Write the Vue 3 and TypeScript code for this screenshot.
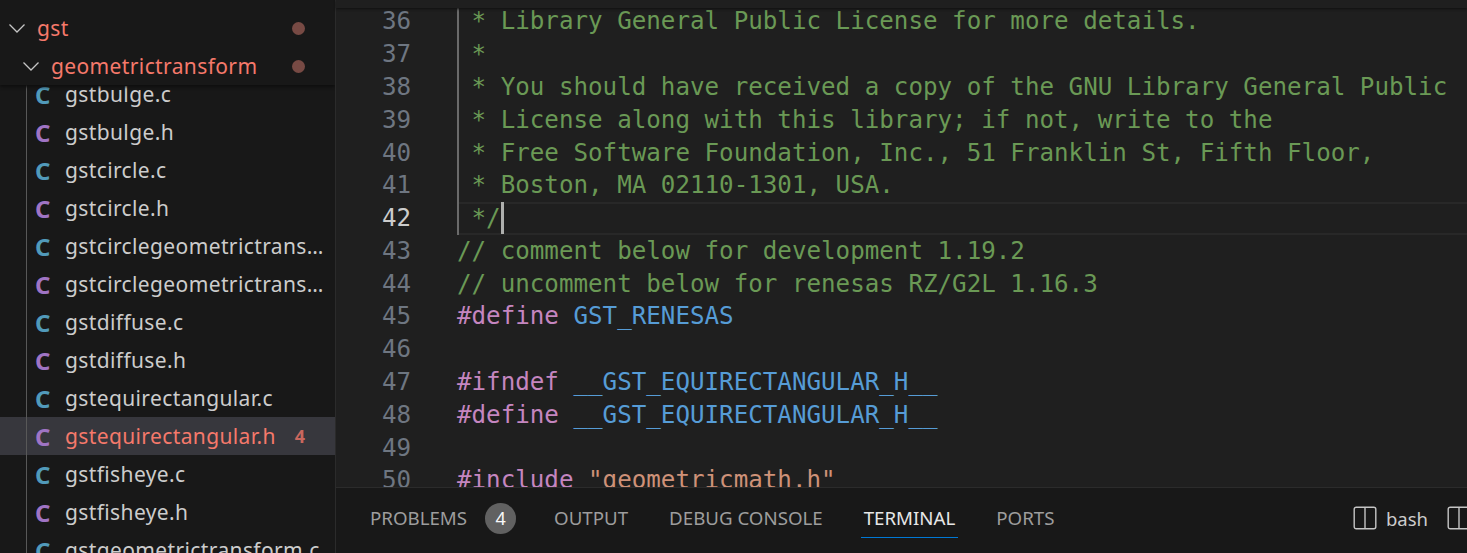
<script setup lang="ts">
interface Tok { t: string; c: string }
interface Line { n: number; toks: Tok[] }
const cm = 'cm', pp = 'pp', mc = 'mc', st = 'st'
const lines: Line[] = [
  { n: 36, toks: [{ t: ' * Library General Public License for more details.', c: cm }] },
  { n: 37, toks: [{ t: ' *', c: cm }] },
  { n: 38, toks: [{ t: ' * You should have received a copy of the GNU Library General Public', c: cm }] },
  { n: 39, toks: [{ t: ' * License along with this library; if not, write to the', c: cm }] },
  { n: 40, toks: [{ t: ' * Free Software Foundation, Inc., 51 Franklin St, Fifth Floor,', c: cm }] },
  { n: 41, toks: [{ t: ' * Boston, MA 02110-1301, USA.', c: cm }] },
  { n: 42, toks: [{ t: ' */', c: cm }] },
  { n: 43, toks: [{ t: '// comment below for development 1.19.2', c: cm }] },
  { n: 44, toks: [{ t: '// uncomment below for renesas RZ/G2L 1.16.3', c: cm }] },
  { n: 45, toks: [{ t: '#define', c: pp }, { t: ' ', c: '' }, { t: 'GST_RENESAS', c: mc }] },
  { n: 46, toks: [] },
  { n: 47, toks: [{ t: '#ifndef', c: pp }, { t: ' ', c: '' }, { t: '__GST_EQUIRECTANGULAR_H__', c: mc }] },
  { n: 48, toks: [{ t: '#define', c: pp }, { t: ' ', c: '' }, { t: '__GST_EQUIRECTANGULAR_H__', c: mc }] },
  { n: 49, toks: [] },
  { n: 50, toks: [{ t: '#include', c: pp }, { t: ' ', c: '' }, { t: '"geometricmath.h"', c: st }] },
]
const files: string[] = [
  'gstbulge.c', 'gstbulge.h', 'gstcircle.c', 'gstcircle.h',
  'gstcirclegeometrictransform.c', 'gstcirclegeometrictransform.h',
  'gstdiffuse.c', 'gstdiffuse.h', 'gstequirectangular.c', 'gstequirectangular.h',
  'gstfisheye.c', 'gstfisheye.h', 'gstgeometrictransform.c',
]
const tabs = ['OUTPUT', 'DEBUG CONSOLE', 'TERMINAL', 'PORTS']
</script>

<template>
  <div class="win">
    <aside class="side">
      <div class="sticky">
        <div class="folder f1">
          <svg class="chev" width="20" height="20" viewBox="0 0 20 20"><path d="M2.5 6.5 L10 14 L17.5 6.5" fill="none" stroke="#c5c5c5" stroke-width="1.3"/></svg>
          <span class="fname">gst</span>
          <i class="dot"></i>
        </div>
        <div class="folder f2">
          <svg class="chev" width="20" height="20" viewBox="0 0 20 20"><path d="M2.5 6.5 L10 14 L17.5 6.5" fill="none" stroke="#c5c5c5" stroke-width="1.3"/></svg>
          <span class="fname">geometrictransform</span>
          <i class="dot"></i>
        </div>
      </div>
      <div class="tree">
        <div v-for="f in files" :key="f" class="file" :class="{ sel: f === 'gstequirectangular.h' }">
          <span class="ico" :class="f.endsWith('.h') ? 'h' : 'c'">C</span>
          <span class="label">{{ f }}</span>
          <span v-if="f === 'gstequirectangular.h'" class="count">4</span>
        </div>
      </div>
    </aside>
    <main class="main">
      <div class="crumbs"></div>
      <div class="editor">
        <div class="code">
          <div v-for="l in lines" :key="l.n" class="line" :class="{ cur: l.n === 42, guide: l.n <= 42 }">
            <span class="num">{{ l.n }}</span>
            <span class="src"><span v-for="(k, i) in l.toks" :key="i" :class="k.c">{{ k.t }}</span><i v-if="l.n === 42" class="caret"></i></span>
          </div>
        </div>
      </div>
      <div class="panel">
        <div class="tab first">PROBLEMS</div>
        <span class="badge">4</span>
        <div v-for="t in tabs" :key="t" class="tab" :class="{ on: t === 'TERMINAL' }">{{ t }}</div>
        <div class="right">
          <svg width="24" height="24" viewBox="0 0 24 24"><rect x="1.2" y="1.2" width="21.6" height="21.6" rx="2" fill="none" stroke="#c5c5c5" stroke-width="1.4"/><path d="M12 2v20" stroke="#c5c5c5" stroke-width="1.4"/></svg>
          <span class="bash">bash</span>
          <svg width="24" height="24" viewBox="0 0 24 24"><rect x="1.2" y="1.2" width="21.6" height="21.6" rx="2" fill="none" stroke="#c5c5c5" stroke-width="1.4"/><path d="M12 2v20" stroke="#c5c5c5" stroke-width="1.4"/></svg>
        </div>
      </div>
    </main>
  </div>
</template>

<style>
html, body { margin: 0; background: #181818; overflow: hidden; }
</style>

<style scoped>
.win { display: flex; width: 1467px; height: 553px; overflow: hidden; background: #181818; font-family: "Noto Sans", sans-serif; }
.side { width: 335px; flex: none; border-right: 1px solid #2b2b2b; overflow: hidden; display: flex; flex-direction: column; height: 553px; position: relative; }
.sticky { height: 85px; padding-top: 9px; box-sizing: border-box; background: #181818; box-shadow: 0 2px 3px #0e0e0e; position: relative; z-index: 2; flex: none; }
.folder { height: 38px; display: flex; align-items: center; font-size: 21px; letter-spacing: 0.38px; color: #f5796b; }
.f1 { padding-left: 7px; }
.f2 { padding-left: 21px; }
.chev { flex: none; margin-right: 10px; }
.fname { flex: 1; line-height: 38px; }
.dot { width: 13px; height: 13px; border-radius: 50%; background: #774a44; margin-right: 30px; }
.tree { margin-top: -10px; }
.file { height: 38px; display: flex; align-items: center; position: relative; color: #cccccc; font-size: 21px; letter-spacing: 0.38px; white-space: nowrap; overflow: hidden; }
.file::before { content: ""; position: absolute; left: 26px; top: 0; bottom: 0; width: 1px; background: #585858; }
.file.sel { background: #37373d; color: #f5796b; }
.ico { width: 65px; box-sizing: border-box; padding-left: 35px; flex: none; font-weight: 700; font-size: 24px; letter-spacing: 0; }
.ico.c { color: #519aba; }
.ico.h { color: #a074c4; }
.label { overflow: hidden; text-overflow: ellipsis; max-width: 265px; }
.count { margin-left: 19px; font-size: 18px; font-weight: 700; color: #c9675e; letter-spacing: 0; }
.main { flex: 1; min-width: 0; display: flex; flex-direction: column; height: 553px; position: relative; }
.crumbs { height: 8px; flex: none; background: #1f1f1f; position: relative; z-index: 2; box-shadow: 0 1px 3px #0f0f0f; }
.editor { flex: 1; min-height: 0; background: #1f1f1f; overflow: hidden; margin-top: -2.7px; }
.code { font-family: "DejaVu Sans Mono", monospace; font-size: 24.2px; }
.line { display: flex; height: 32.8px; line-height: 32.8px; white-space: pre; }
.num { width: 75px; flex: none; text-align: right; color: #6e7681; margin-right: 46px; }
.cur .num { color: #cccccc; }
.src { flex: 1; position: relative; display: block; }
.guide .src { box-shadow: inset 2px 0 0 #6a6a6a; }
.cur .src { box-shadow: inset 2px 0 0 #6a6a6a, inset 0 2px 0 #282828, inset 0 -2px 0 #282828; }
.caret { display: inline-block; width: 3px; height: 32px; background: #aeafad; vertical-align: top; }
.cm { color: #6a9955; }
.pp { color: #c586c0; }
.mc { color: #569cd6; }
.st { color: #ce9178; }
.panel { height: 66px; flex: none; box-sizing: border-box; border-top: 1px solid #2b2b2b; background: #181818; display: flex; align-items: center; padding: 0 0 5px 34px; position: relative; font-size: 18.7px; color: #9d9d9d; }
.tab { height: 38px; line-height: 38px; white-space: nowrap; margin-right: 41px; }
.tab.first { margin-right: 18px; }
.tab.on { color: #e7e7e7; box-shadow: 0 1px 0 #0078d4; padding: 0 3px; margin: 0 38px 0 -3px; }
.badge { width: 31px; height: 31px; border-radius: 50%; background: #616161; color: #f8f8f8; font-size: 18px; line-height: 31px; text-align: center; margin-right: 38px; }
.right { margin-left: auto; display: flex; align-items: center; margin-right: -4px; color: #cccccc; }
.bash { margin: 0 19px 0 9px; font-size: 18.5px; }
</style>
